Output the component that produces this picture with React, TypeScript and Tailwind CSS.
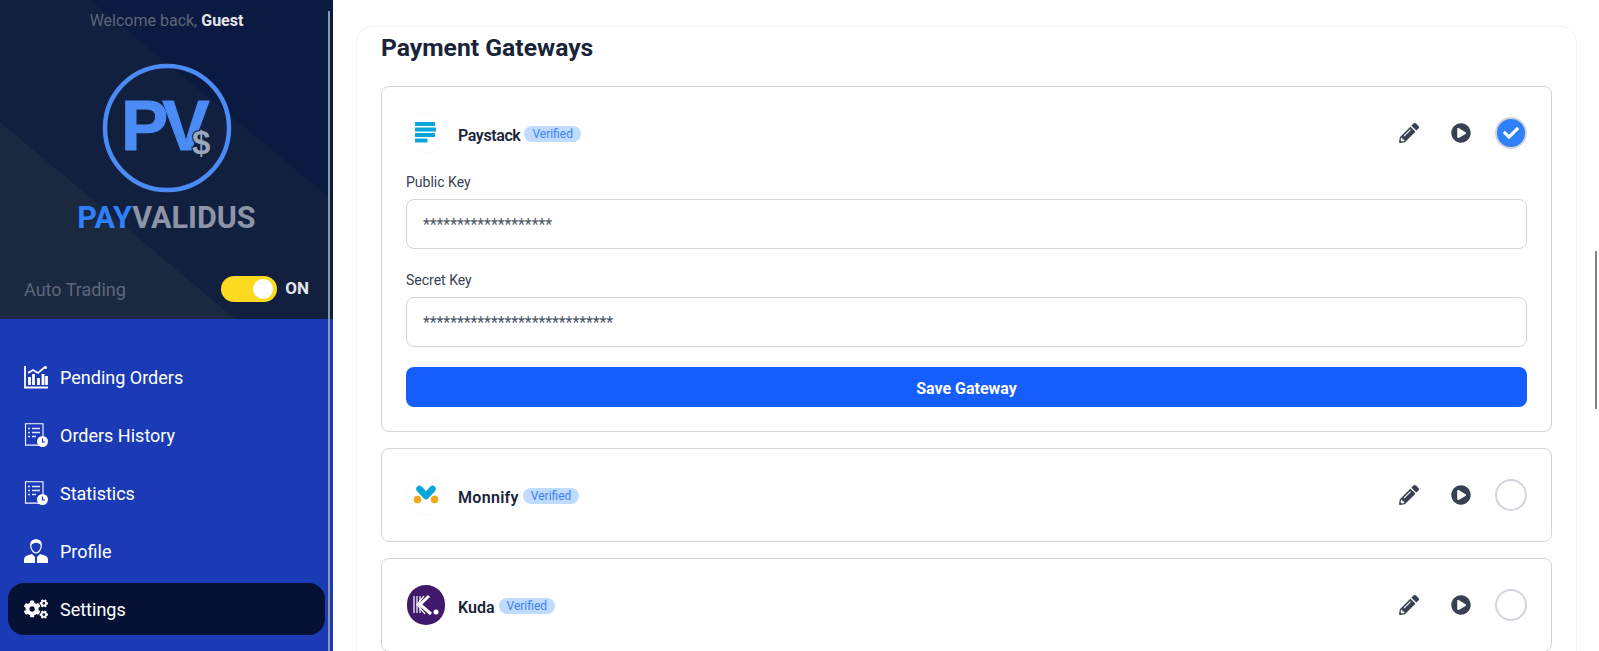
import React from 'react';
import { FaCogs, FaPencilAlt, FaPlayCircle, FaCheck } from 'react-icons/fa';

const PendingIcon = () => (
  <svg width="24" height="24" viewBox="0 0 24 24" className="shrink-0" fill="none" stroke="white">
    <path d="M1 1v21.500h23" strokeWidth="1.800" />
    <path d="M5.500 20v-8M9.500 20v-11M14.500 20v-7M19 20v-11M22.500 20v-9" strokeWidth="2.800" />
    <path d="M4 8l5-3 5 3 7-6" strokeWidth="1.700" />
    <circle cx="21.500" cy="2.500" r="1.500" fill="white" stroke="none" />
  </svg>
);

const ReportIcon = () => (
  <svg width="24" height="24" viewBox="0 0 24 24" className="shrink-0" fill="none" stroke="white">
    <path d="M15 22.500H1.500V.8h17.500v13" strokeWidth="1.100" />
    <path d="M1.500 22h12" stroke="#a9b8ea" strokeWidth="1.600" />
    <path d="M4 5.500h2M8 5.500h8M4 9.500h2M8 9.500h8M4 13.500h2M8 13.500h4" strokeWidth="1.300" stroke="#dfe5fa" />
    <circle cx="18.500" cy="18.500" r="5.500" fill="white" stroke="none" />
    <path d="M18.500 15.500v3.500h2.500" stroke="#1a3bb5" strokeWidth="1.200" />
  </svg>
);

const ProfileIcon = () => (
  <svg width="24" height="24" viewBox="0 0 24 24" className="shrink-0">
    <path d="M0 24v-3.500c0-2.500 1.800-3.600 4-4.300l4-1.300 3 3.200v5.900zM24 24v-3.500c0-2.500-1.800-3.600-4-4.300l-4-1.300-3 3.200v5.900z" fill="white" />
    <path d="M12 .8c3.200 0 5.300 2.200 5.300 5.500 0 4-2.500 7.700-5.300 7.700s-5.300-3.700-5.300-7.700C6.700 3 8.800.8 12 .8z" fill="none" stroke="white" strokeWidth="1.200" />
    <path d="M6.800 6.500C7 2.500 9 .5 12 .5s5 2 5.200 6c-1.500-2-4-3-5.200-2.700-1.500.3-3.700 1-5.200 2.700z" fill="white" />
  </svg>
);

const navItems = [
  { label: 'Pending Orders', icon: <PendingIcon /> },
  { label: 'Orders History', icon: <ReportIcon /> },
  { label: 'Statistics', icon: <ReportIcon /> },
  { label: 'Profile', icon: <ProfileIcon /> },
];

const PaystackLogo = () => (
  <svg width="22" height="22" viewBox="0 0 22 22" fill="#09a5db">
    <rect x="0" y="0" width="20" height="4" rx="0.5" />
    <rect x="0" y="5.500" width="21" height="4" rx="0.5" />
    <rect x="0" y="11" width="20" height="4" rx="0.5" />
    <rect x="0" y="16.500" width="12.500" height="4" rx="0.5" />
  </svg>
);

const MonnifyLogo = () => (
  <svg width="28" height="20" viewBox="0 0 28 20">
    <path d="M7.500 4l6.500 7 6.500-7" fill="none" stroke="#09a5db" strokeWidth="6.500" strokeLinecap="round" strokeLinejoin="round" />
    <circle cx="5.500" cy="14.500" r="3.800" fill="#f0a81e" />
    <circle cx="22.500" cy="14.500" r="3.800" fill="#f0a81e" />
  </svg>
);

const KudaLogo = () => (
  <div className="w-10 h-10 rounded-full bg-[#40196d] flex items-center justify-center">
    <svg width="28" height="24" viewBox="0 0 28 24" fill="none" stroke="white">
      <path d="M2 3v17M5 3v17M8 3v17" strokeWidth="1.200" />
      <path d="M17 3L8 11.500 19 21" strokeWidth="3" />
      <path d="M12 3L5 11.500 13 21" strokeWidth="1.200" />
      <circle cx="24" cy="19" r="2.500" fill="white" stroke="none" />
    </svg>
  </div>
);

const GatewayHeader = ({ name, logo, active, nameClass }: { name: string; logo: React.ReactNode; active?: boolean; nameClass?: string }) => (
  <div className="flex items-center h-10">
    <div className="w-10 h-10 rounded-full border border-gray-50 flex items-center justify-center shrink-0">{logo}</div>
    <span className={`ml-3 mt-1.5 text-base font-semibold text-[#1a2438] leading-6 ${nameClass ?? ''}`}>{name}</span>
    <span className="ml-1 mt-0.5 px-2 h-4 rounded-full bg-[#bfdbfe] text-[#3b82f6] text-xs leading-4">Verified</span>
    <div className="ml-auto flex items-center text-[#374151]">
      <FaPencilAlt className="w-5 h-5" />
      <FaPlayCircle className="ml-8 w-5 h-5" />
      {active ? (
        <div className="ml-[24px] w-8 h-8 rounded-full border-2 border-[#d1d5db] bg-[#2f80fb] flex items-center justify-center">
          <FaCheck className="w-4 h-4 text-white" />
        </div>
      ) : (
        <div className="ml-[24px] w-8 h-8 rounded-full border-2 border-[#d1d5db]" />
      )}
    </div>
  </div>
);

const KeyField = ({ label, value, className }: { label: string; value: string; className: string }) => (
  <div className={className}>
    <div className="text-sm leading-5 text-[#374151] mb-[7px]">{label}</div>
    <div className="h-[50px] rounded-lg border border-[#d1d5db] px-4 pt-0.5 flex items-center text-base tracking-[-0.1px] text-[#4b5563]">{value}</div>
  </div>
);

export default function App() {
  return (
    <div className="h-[651px] w-[1599px] overflow-hidden flex bg-white font-['Roboto','Noto_Sans',sans-serif]">
      {/* Sidebar */}
      <aside className="relative w-[333px] shrink-0 flex flex-col bg-[#1a3bb5]">
        <div className="relative h-[319px] shrink-0 overflow-hidden bg-[#0a1a40] flex flex-col items-center">
          <svg className="absolute inset-0" width="333" height="319">
            <polygon points="90,0 333,200 333,319 0,319 0,0" fill="#11203f" />
            <polygon points="0,122 235,319 0,319" fill="#1a2940" />
          </svg>
          <div className="relative text-base leading-6 mt-[9px] text-[#5f6679]">
            Welcome back, <span className="font-bold text-[#e5e7eb]">Guest</span>
          </div>
          <svg className="relative mt-[30px]" width="130" height="130" viewBox="0 0 130 130">
            <circle cx="65" cy="65" r="62" fill="none" stroke="#4b8bf5" strokeWidth="4.500" />
            <text x="19" y="87" fontFamily="Liberation Sans" fontWeight="700" fontSize="71" fill="#4b8bf5" stroke="#4b8bf5" strokeWidth="1" letterSpacing="-6">PV</text>
            <text x="90" y="91" fontFamily="Liberation Sans" fontWeight="700" fontSize="33" fill="#9aa8bd" stroke="#11203f" strokeWidth="2" paintOrder="stroke">$</text>
          </svg>
          <div className="relative mt-[7px] text-[30.5px] leading-9 font-bold">
            <span className="text-[#2f80fb]">PAY</span>
            <span className="text-[#8c95a8]">VALIDUS</span>
          </div>
          <div className="relative mt-[38px] w-full flex items-center pl-6 pr-6">
            <span className="mt-0.5 text-lg leading-7 text-[#5f6679]">Auto Trading</span>
            <div className="ml-auto w-14 h-[26px] rounded-full bg-[#fdd91f] flex items-center justify-end pr-1">
              <div className="w-5 h-5 rounded-full bg-white" />
            </div>
            <span className="ml-2 text-[17px] font-bold text-[#e5e7eb]">ON</span>
          </div>
        </div>
        <nav className="flex flex-col gap-1.5 px-2 pt-8">
          {navItems.map((item) => (
            <div key={item.label} className="h-[52px] flex items-center gap-3 px-4 text-lg text-white">
              {item.icon}
              <span className="pt-0.5">{item.label}</span>
            </div>
          ))}
          <div className="h-[52px] w-[317px] flex items-center gap-3 px-4 text-lg text-white rounded-2xl bg-[#061233]">
            <FaCogs className="w-6 h-6 shrink-0" />
            <span className="pt-0.5">Settings</span>
          </div>
        </nav>
        {/* scroll track */}
        <div className="absolute right-[3px] top-[11px] bottom-0 w-0.5 bg-[#8d95a8]" />
      </aside>

      {/* Main */}
      <main className="flex-1 pl-[24px] pr-[21px] pt-[26px] relative">
        <div className="rounded-2xl border border-gray-100 px-6 pb-6 h-[700px] -ml-px mr-px">
          <h1 className="text-[24.7px] leading-[42px] font-bold text-[#1a2438]">Payment Gateways</h1>
          <div className="mt-[17px] flex flex-col gap-4">
            <section className="h-[346px] rounded-lg border border-[#d1d5db] px-6 pt-[26px]">
              <GatewayHeader name="Paystack" nameClass="tracking-[-0.4px]" active logo={<PaystackLogo />} />
              <KeyField className="mt-[19px]" label="Public Key" value="*******************" />
              <KeyField className="mt-[21px]" label="Secret Key" value="****************************" />
              <button className="mt-5 w-full h-10 pt-[3px] rounded-lg bg-[#155efb] text-white text-base font-bold">Save Gateway</button>
            </section>
            <section className="h-[94px] rounded-lg border border-[#d1d5db] px-6 pt-[26px]">
              <GatewayHeader name="Monnify" nameClass="tracking-[0.3px]" logo={<MonnifyLogo />} />
            </section>
            <section className="h-[94px] rounded-lg border border-[#d1d5db] px-6 pt-[26px]">
              <GatewayHeader name="Kuda" logo={<KudaLogo />} />
            </section>
          </div>
        </div>
        <div className="absolute right-[2px] top-[251px] h-[158px] w-0.5 bg-[#808085]" />
      </main>
    </div>
  );
}
